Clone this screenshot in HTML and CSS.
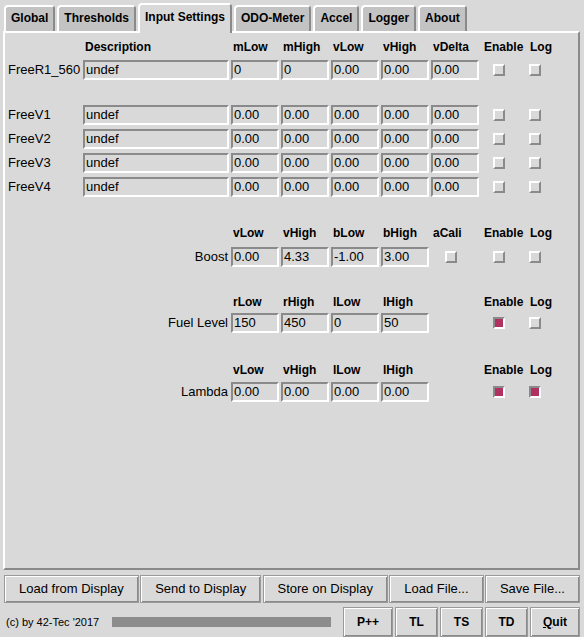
FILE: index.html
```html
<!DOCTYPE html>
<html>
<head>
<meta charset="utf-8">
<title>Input Settings</title>
<link rel="stylesheet" href="styles.css">
</head>
<body>
<div class="app">
  <div class="tabs">
    <div class="tab">Global</div>
    <div class="tab">Thresholds</div>
    <div class="tab active">Input Settings</div>
    <div class="tab">ODO-Meter</div>
    <div class="tab">Accel</div>
    <div class="tab">Logger</div>
    <div class="tab">About</div>
  </div>

  <div class="panel">
    <div class="row head first">
      <div></div>
      <div class="h">Description</div>
      <div class="h">mLow</div>
      <div class="h">mHigh</div>
      <div class="h">vLow</div>
      <div class="h">vHigh</div>
      <div class="h">vDelta</div>
      <div class="h en">Enable</div>
      <div class="h lg">Log</div>
    </div>
    <div class="row data m5">
      <div class="lbl">FreeR1_560</div>
      <div class="cell"><div class="entry wide">undef</div></div>
      <div class="cell"><div class="entry">0</div></div>
      <div class="cell"><div class="entry">0</div></div>
      <div class="cell"><div class="entry">0.00</div></div>
      <div class="cell"><div class="entry">0.00</div></div>
      <div class="cell"><div class="entry">0.00</div></div>
      <div class="cell"><span class="cb en-cb"></span></div>
      <div class="cell"><span class="cb"></span></div>
    </div>
    <div class="spacer"></div>
    <div class="row data">
      <div class="lbl">FreeV1</div>
      <div class="cell"><div class="entry wide">undef</div></div>
      <div class="cell"><div class="entry">0.00</div></div>
      <div class="cell"><div class="entry">0.00</div></div>
      <div class="cell"><div class="entry">0.00</div></div>
      <div class="cell"><div class="entry">0.00</div></div>
      <div class="cell"><div class="entry">0.00</div></div>
      <div class="cell"><span class="cb en-cb"></span></div>
      <div class="cell"><span class="cb"></span></div>
    </div>
    <div class="row data">
      <div class="lbl">FreeV2</div>
      <div class="cell"><div class="entry wide">undef</div></div>
      <div class="cell"><div class="entry">0.00</div></div>
      <div class="cell"><div class="entry">0.00</div></div>
      <div class="cell"><div class="entry">0.00</div></div>
      <div class="cell"><div class="entry">0.00</div></div>
      <div class="cell"><div class="entry">0.00</div></div>
      <div class="cell"><span class="cb en-cb"></span></div>
      <div class="cell"><span class="cb"></span></div>
    </div>
    <div class="row data">
      <div class="lbl">FreeV3</div>
      <div class="cell"><div class="entry wide">undef</div></div>
      <div class="cell"><div class="entry">0.00</div></div>
      <div class="cell"><div class="entry">0.00</div></div>
      <div class="cell"><div class="entry">0.00</div></div>
      <div class="cell"><div class="entry">0.00</div></div>
      <div class="cell"><div class="entry">0.00</div></div>
      <div class="cell"><span class="cb en-cb"></span></div>
      <div class="cell"><span class="cb"></span></div>
    </div>
    <div class="row data">
      <div class="lbl">FreeV4</div>
      <div class="cell"><div class="entry wide">undef</div></div>
      <div class="cell"><div class="entry">0.00</div></div>
      <div class="cell"><div class="entry">0.00</div></div>
      <div class="cell"><div class="entry">0.00</div></div>
      <div class="cell"><div class="entry">0.00</div></div>
      <div class="cell"><div class="entry">0.00</div></div>
      <div class="cell"><span class="cb en-cb"></span></div>
      <div class="cell"><span class="cb"></span></div>
    </div>

    <div class="row head boost-h">
      <div class="span2"></div>
      <div class="h">vLow</div>
      <div class="h">vHigh</div>
      <div class="h">bLow</div>
      <div class="h">bHigh</div>
      <div class="h">aCali</div>
      <div class="h en">Enable</div>
      <div class="h lg">Log</div>
    </div>
    <div class="row data m6">
      <div class="lbl right span2">Boost</div>
      <div class="cell"><div class="entry">0.00</div></div>
      <div class="cell"><div class="entry">4.33</div></div>
      <div class="cell"><div class="entry">-1.00</div></div>
      <div class="cell"><div class="entry">3.00</div></div>
      <div class="cell"><span class="cb ac-cb"></span></div>
      <div class="cell"><span class="cb en-cb"></span></div>
      <div class="cell"><span class="cb"></span></div>
    </div>

    <div class="row head fuel-h">
      <div class="span2"></div>
      <div class="h">rLow</div>
      <div class="h">rHigh</div>
      <div class="h">lLow</div>
      <div class="h">lHigh</div>
      <div></div>
      <div class="h en">Enable</div>
      <div class="h lg">Log</div>
    </div>
    <div class="row data m3">
      <div class="lbl right span2">Fuel Level</div>
      <div class="cell"><div class="entry">150</div></div>
      <div class="cell"><div class="entry">450</div></div>
      <div class="cell"><div class="entry">0</div></div>
      <div class="cell"><div class="entry">50</div></div>
      <div class="cell"></div>
      <div class="cell"><span class="cb en-cb on"></span></div>
      <div class="cell"><span class="cb"></span></div>
    </div>

    <div class="row head lambda-h">
      <div class="span2"></div>
      <div class="h">vLow</div>
      <div class="h">vHigh</div>
      <div class="h">lLow</div>
      <div class="h">lHigh</div>
      <div></div>
      <div class="h en">Enable</div>
      <div class="h lg">Log</div>
    </div>
    <div class="row data m4">
      <div class="lbl right span2">Lambda</div>
      <div class="cell"><div class="entry">0.00</div></div>
      <div class="cell"><div class="entry">0.00</div></div>
      <div class="cell"><div class="entry">0.00</div></div>
      <div class="cell"><div class="entry">0.00</div></div>
      <div class="cell"></div>
      <div class="cell"><span class="cb en-cb on"></span></div>
      <div class="cell"><span class="cb on"></span></div>
    </div>
  </div>

  <div class="actions">
    <div class="btn">Load from Display</div>
    <div class="btn">Send to Display</div>
    <div class="btn">Store on Display</div>
    <div class="btn">Load File...</div>
    <div class="btn">Save File...</div>
  </div>

  <div class="status">
    <div class="copy">(c) by 42-Tec '2017</div>
    <div class="progress"></div>
    <div class="tools">
      <div class="tbtn w50">P++</div>
      <div class="tbtn w43">TL</div>
      <div class="tbtn w43">TS</div>
      <div class="tbtn w43">TD</div>
      <div class="tbtn w50"><span class="ul">Q</span>uit</div>
    </div>
  </div>
</div>
</body>
</html>
```

FILE: styles.css
```css
* { box-sizing: border-box; }

html, body {
  margin: 0;
  padding: 0;
  background: #d9d9d9;
}

body {
  width: 584px;
  height: 637px;
  overflow: hidden;
  font-family: "Liberation Sans", Arial, sans-serif;
  color: #000;
}

.app {
  width: 584px;
  height: 637px;
}

/* ---------- tabs ---------- */
.tabs {
  display: flex;
  align-items: flex-end;
  gap: 2px;
  height: 31px;
  padding-left: 4px;
}

.tab {
  height: 26px;
  padding: 0 5px;
  background: #c3c3c3;
  border-left: 2px solid #ffffff;
  border-top: 2px solid #ffffff;
  border-right: 2px solid #8a8a8a;
  border-radius: 4px 4px 0 0;
  font-weight: bold;
  font-size: 12px;
  line-height: 22px;
  white-space: nowrap;
}

.tab.active {
  position: relative;
  z-index: 1;
  height: 30px;
  margin-bottom: -2px;
  background: #d9d9d9;
  line-height: 25px;
}

/* ---------- panel ---------- */
.panel {
  margin-left: 3px;
  width: 577px;
  height: 539px;
  border-left: 2px solid #ffffff;
  border-top: 2px solid #ffffff;
  border-right: 2px solid #8a8a8a;
  border-bottom: 2px solid #8a8a8a;
  padding-top: 6px;
}

.row {
  display: grid;
  grid-template-columns: 78px 148px 50px 50px 50px 50px 50px 48px 1fr;
}

.row.head {
  height: 16px;
  font-weight: bold;
  font-size: 12px;
  line-height: 16px;
}

.row.data {
  height: 20px;
  margin-bottom: 4px;
  font-size: 13px;
  line-height: 20px;
}

.span2 { grid-column: span 2; }

.h { padding-left: 2px; white-space: nowrap; }
.h.en { padding-left: 3px; }
.h.lg { margin-left: -1px; }

.m3 { margin-top: 3px; }
.m4 { margin-top: 4px; }
.m5 { margin-top: 5px; }
.m6 { margin-top: 6px; }

.spacer { height: 21px; }

.boost-h { margin-top: 28px; }
.fuel-h { margin-top: 27px; }
.lambda-h { margin-top: 29px; }

.lbl {
  padding-left: 3px;
  white-space: nowrap;
}
.lbl.right {
  text-align: right;
  padding-right: 3px;
}

.cell {
  display: flex;
  align-items: center;
}

.entry {
  width: 48px;
  height: 20px;
  border-style: solid;
  border-width: 2px;
  border-color: #8a8a8a #ffffff #ffffff #8a8a8a;
  background: #d9d9d9;
  padding-left: 1px;
  font-size: 13px;
  line-height: 16px;
  white-space: nowrap;
  overflow: hidden;
}
.entry.wide { width: 146px; }

/* checkbuttons */
.cb {
  display: block;
  width: 12px;
  height: 12px;
  border-style: solid;
  border-width: 2px;
  border-color: #ffffff #8a8a8a #8a8a8a #ffffff;
  background: #d9d9d9;
}
.cb.on {
  border-color: #8a8a8a #ffffff #ffffff #8a8a8a;
  background: #b03060;
}
.en-cb { margin-left: 12px; }
.ac-cb { margin-left: 14px; }

/* ---------- action buttons ---------- */
.actions {
  display: flex;
  justify-content: space-between;
  margin-top: 5px;
  padding: 0 4px 0 4px;
}

.btn {
  height: 28px;
  padding: 0 14px;
  border: 1px solid #9a9a9a;
  box-shadow: inset 1px 1px 0 #ffffff, inset -1px -1px 0 #8a8a8a;
  font-size: 13px;
  line-height: 26px;
  text-align: center;
  white-space: nowrap;
}

/* ---------- status row ---------- */
.status {
  display: flex;
  align-items: center;
  margin-top: 4px;
  height: 30px;
}

.copy {
  width: 112px;
  padding-left: 6px;
  font-size: 11px;
  white-space: nowrap;
}

.progress {
  width: 219px;
  height: 10px;
  background: #8c8c8c;
}

.tools {
  display: flex;
  gap: 2px;
  margin-left: 12px;
  align-self: stretch;
}

.tbtn {
  height: 30px;
  border: 1px solid #9a9a9a;
  box-shadow: inset 1px 1px 0 #ffffff, inset -1px -1px 0 #8a8a8a;
  font-weight: bold;
  font-size: 12px;
  line-height: 28px;
  text-align: center;
}
.w50 { width: 50px; }
.w43 { width: 43px; }

.ul { text-decoration: underline; }
```
